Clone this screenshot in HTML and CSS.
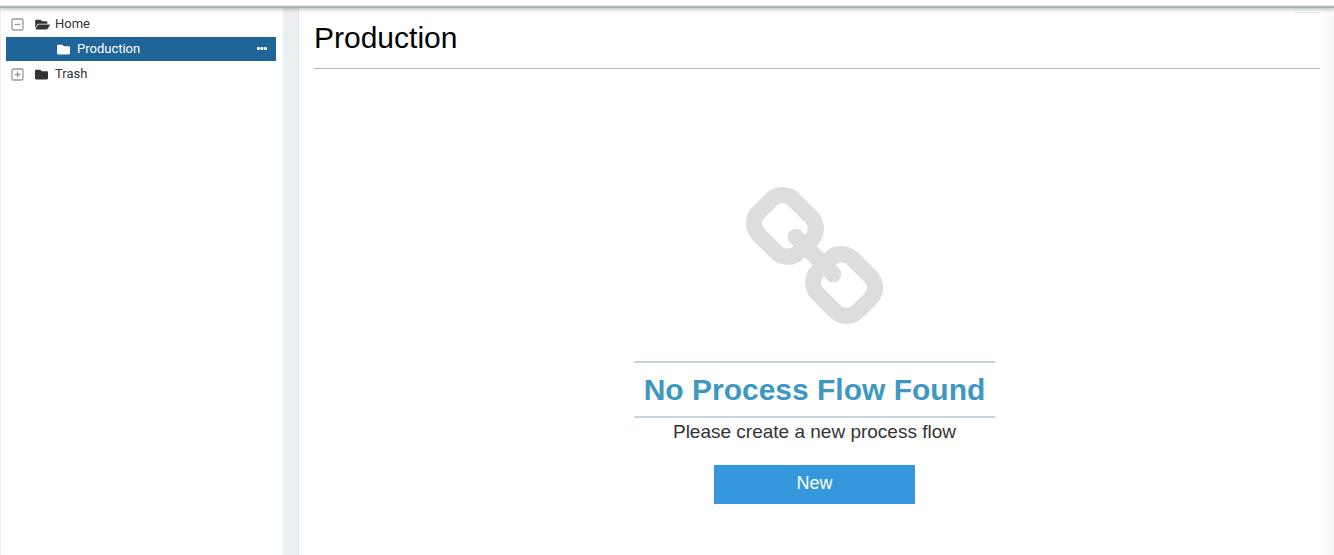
FILE: index.html
```html
<!DOCTYPE html>
<html lang="en">
<head>
<meta charset="utf-8">
<title>Production</title>
<link rel="stylesheet" href="styles.css">
</head>
<body>
<div class="topbar"></div>
<div class="workspace">
  <nav class="sidebar" aria-label="Folders">
    <ul class="tree">
      <li class="row">
        <button class="toggle" aria-label="Collapse Home"><svg width="13" height="13" viewBox="0 0 13 13"><rect x="1" y="1" width="11" height="11" rx="1.5"/><path d="M3.5 6.5h6"/></svg></button>
        <svg class="folder folder-open" viewBox="0 0 576 512"><path d="M572.694 292.093L500.27 416.248A63.997 63.997 0 0 1 444.989 448H45.025c-18.523 0-30.064-20.093-20.731-36.093l72.424-124.155A64 64 0 0 1 152 256h399.964c18.523 0 30.064 20.093 20.73 36.093zM152 224h328v-48c0-26.51-21.49-48-48-48H272l-64-64H48C21.49 64 0 85.49 0 112v278.046l69.077-118.418C86.214 242.25 117.989 224 152 224z"/></svg>
        <a class="name" href="#">Home</a>
      </li>
      <li class="row row-child selected">
        <svg class="folder" viewBox="0 0 512 512"><path d="M464 128H272l-64-64H48C21.5 64 0 85.5 0 112v288c0 26.5 21.5 48 48 48h416c26.5 0 48-21.5 48-48V176c0-26.5-21.5-48-48-48z"/></svg>
        <a class="name" href="#">Production</a>
        <button class="more" aria-label="More actions"><svg width="11" height="3" viewBox="0 0 11 3"><rect width="3" height="3" rx="1"/><rect x="3.5" width="3" height="3" rx="1"/><rect x="7" width="3" height="3" rx="1"/></svg></button>
      </li>
      <li class="row">
        <button class="toggle" aria-label="Expand Trash"><svg width="13" height="13" viewBox="0 0 13 13"><rect x="1" y="1" width="11" height="11" rx="1.5"/><path d="M3.5 6.5h6M6.5 3.5v6"/></svg></button>
        <svg class="folder" viewBox="0 0 512 512"><path d="M464 128H272l-64-64H48C21.5 64 0 85.5 0 112v288c0 26.5 21.5 48 48 48h416c26.5 0 48-21.5 48-48V176c0-26.5-21.5-48-48-48z"/></svg>
        <a class="name" href="#">Trash</a>
      </li>
    </ul>
  </nav>
  <div class="splitter"></div>
  <main class="content">
    <div class="toolbar-edge"></div>
    <h1 class="title">Production</h1>
    <section class="empty">
      <svg class="chain" viewBox="16 16 1632 1632"><path d="M1456 1216q0-40-28-68l-208-208q-28-28-68-28-42 0-72 32 3 3 19 18.5t21.5 21.5 15 19 13 25.5 3.5 27.5q0 40-28 68t-68 28q-15 0-27.5-3.5t-25.5-13-19-15-21.5-21.5-18.5-19q-33 31-33 73 0 40 28 68l206 207q27 27 68 27 40 0 68-26l147-146q28-28 28-67zm-703-705q0-40-28-68l-206-207q-28-28-68-28-39 0-68 27l-147 146q-28 28-28 67 0 40 28 68l208 208q27 27 68 27 42 0 72-31-3-3-19-18.5t-21.5-21.5-15-19-13-25.5-3.5-27.5q0-40 28-68t68-28q15 0 27.5 3.5t25.5 13 19 15 21.5 21.5 18.5 19q33-31 33-73zm895 705q0 120-85 203l-147 146q-83 83-203 83-121 0-204-85l-206-207q-83-83-83-203 0-123 88-209l-88-88q-86 88-208 88-120 0-204-84l-208-208q-84-84-84-204t85-203l147-146q83-83 203-83 121 0 204 85l206 207q83 83 83 203 0 123-88 209l88 88q86-88 208-88 120 0 204 84l208 208q84 84 84 204z"/></svg>
      <h2 class="headline">No Process Flow Found</h2>
      <p class="hint">Please create a new process flow</p>
      <button class="create">New</button>
    </section>
  </main>
</div>
</body>
</html>
```
FILE: styles.css
```css
* { box-sizing: border-box; }
body {
  margin: 0;
  min-height: 100vh;
  display: flex;
  flex-direction: column;
  background: #fff;
  font-family: "Liberation Sans", Arial, sans-serif;
}
.topbar {
  height: 8px;
  border-bottom: 2px solid #adb4b7;
  box-shadow: 0 1px 4px rgba(0, 0, 0, 0.3), inset 0 -1px #e6ebec;
  position: relative;
  z-index: 1;
}
.workspace { flex: 1; display: flex; }
.sidebar {
  width: 283px;
  padding: 4px 7px 0 5px;
  border-left: 1px solid #e9edef;
}
.tree {
  list-style: none;
  margin: 0;
  padding: 0;
  display: flex;
  flex-direction: column;
  gap: 1px;
}
.row {
  height: 24px;
  padding: 0 8px 0 5px;
  display: flex;
  align-items: center;
  color: #333;
}
.row-child { padding-left: 51px; }
.selected { background: #20659a; color: #fff; }
button { font: inherit; color: inherit; border: 0; padding: 0; background: none; }
.toggle { display: flex; margin-right: 11px; }
.toggle svg { fill: none; stroke: #999; stroke-width: 1.3; }
.folder { width: 13px; height: 13px; margin-right: 7px; fill: currentColor; }
.folder-open { width: 15px; margin-right: 5px; }
.name {
  font: 13px/24px Roboto, sans-serif;
  color: inherit;
  text-decoration: none;
}
.more { margin-left: auto; padding-bottom: 1px; display: flex; fill: currentColor; }
.splitter {
  width: 16px;
  background: #ebeff2;
  border-right: 1px solid #e1e6e9;
}
.content {
  flex: 1;
  padding: 4px 14px 0 15px;
  background: linear-gradient(to left, #f7f7f7, #fff 18px);
}
.toolbar-edge {
  width: 26px;
  height: 1px;
  margin-left: auto;
  background: #e8e8e8;
}
.title {
  margin: 0;
  padding: 7px 0 12px;
  font-size: 30px;
  line-height: 36px;
  font-weight: 400;
  color: #000;
  border-bottom: 1px solid #bbb;
}
.empty {
  display: flex;
  flex-direction: column;
  align-items: center;
  padding: 118px 5px 40px 0;
}
.chain { width: 137px; height: 137px; fill: #ddd; }
.headline {
  margin: 37px 0 0;
  padding: 10px 10px 9px;
  border: solid #c5d5de;
  border-width: 2px 0;
  font-size: 30px;
  line-height: 34px;
  color: #3d98c2;
}
.hint { margin: 2px 0 0; font-size: 19px; line-height: 24px; color: #333; }
.create {
  width: 201px;
  height: 39px;
  margin-top: 21px;
  padding-bottom: 2px;
  background: #3598dc;
  color: #fff;
  font-size: 18px;
}
```
